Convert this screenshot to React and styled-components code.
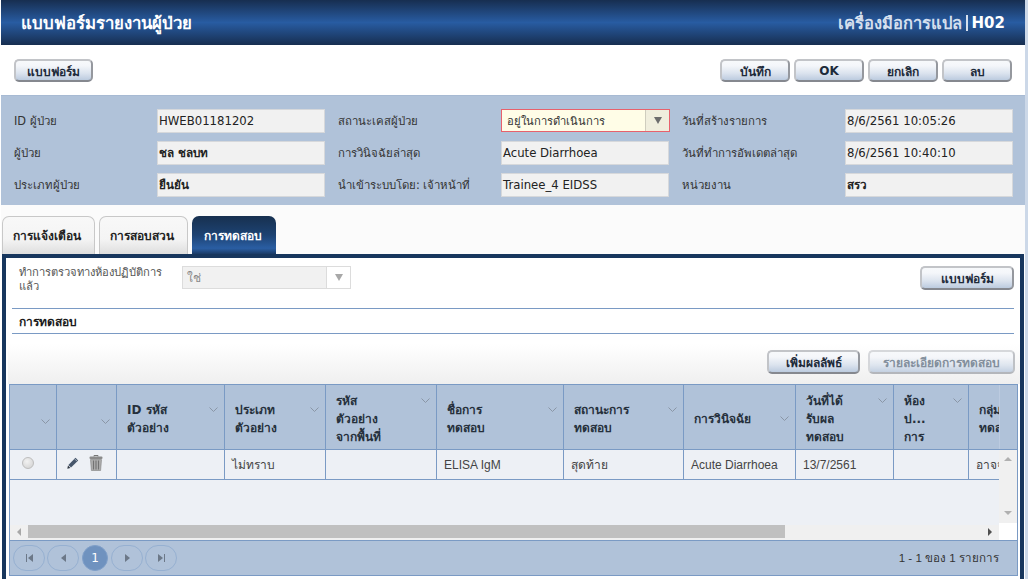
import React from 'react';
import styled, { createGlobalStyle } from 'styled-components';

const GlobalStyle = createGlobalStyle`
  html, body {
    margin: 0;
    padding: 0;
    background: #ffffff;
  }
  * {
    box-sizing: border-box;
  }
  body {
    font-family: "DejaVu Sans", "Noto Sans", sans-serif;
    font-size: 12px;
    color: #333333;
  }
`;

const Page = styled.div`
  width: 1028px;
  height: 579px;
  overflow: hidden;
  border-left: 1px solid #ffffff;
  border-right: 3px solid #ccd8e8;
`;

const Header = styled.header`
  height: 45px;
  padding: 0 20px;
  display: flex;
  align-items: center;
  justify-content: space-between;
  background: linear-gradient(180deg, #172e50 0%, #285ca2 50%, #172e50 100%);
  color: #ffffff;
  font-weight: bold;
`;

const Title = styled.div`
  font-size: 16.8px;
`;

const HeaderTools = styled.div`
  display: flex;
  align-items: center;
  font-size: 16.5px;
  color: #d5dfed;
`;

const HeaderDivider = styled.span`
  width: 2px;
  height: 16px;
  margin: 0 4px;
  background: #d5dfed;
`;

const HeaderCode = styled.span`
  font-size: 15px;
  color: #ffffff;
`;

const Toolbar = styled.div`
  height: 50px;
  padding: 14px 13px 0;
  display: flex;
  justify-content: space-between;
  align-items: flex-start;
`;

const ButtonGroup = styled.div`
  display: flex;
  gap: 4px;
`;

const Button = styled.button`
  width: ${p => p.$width}px;
  height: ${p => p.$height || 23}px;
  padding: 1px 0 0;
  font-family: inherit;
  font-size: 12px;
  font-weight: bold;
  color: ${p => (p.disabled ? '#6f7d8d' : '#1d2a3a')};
  border: 2px solid ${p => (p.disabled ? '#d0d2d6' : '#c2c4c8')};
  border-right-color: ${p => (p.disabled ? '#b5b8bd' : '#95989e')};
  border-bottom-color: ${p => (p.disabled ? '#a9acb2' : '#85888f')};
  border-radius: 5px;
  background: linear-gradient(180deg, #f7f9fb 0%, #f4f6fa 25%, #dbe3ee 65%, #bccbdf 100%);
  ${p => p.disabled && 'opacity: 0.85;'}
`;

const InfoBand = styled.section`
  height: 110px;
  padding: 13px 0 0 13px;
  display: grid;
  grid-template-columns: 143px 181px 163px 181px 163px 181px;
  grid-auto-rows: 24px;
  row-gap: 8px;
  align-items: center;
  background: #b0c2d9;
  border-top: 1px solid #a7bad3;
`;

const FieldLabel = styled.div`
  margin-top: -1px;
  font-size: 11.4px;
  color: #333333;
  white-space: nowrap;
`;

const FieldValue = styled.div`
  height: 24px;
  width: 168px;
  padding-left: 1px;
  display: flex;
  align-items: center;
  font-size: 11.7px;
  font-weight: ${p => (p.$strong ? 'bold' : 'normal')};
  background: #f1f1f1;
  border: 1px solid #d6d8db;
  color: #222222;
  white-space: nowrap;
`;

const StatusSelect = styled.div`
  height: 23px;
  width: 169px;
  display: flex;
  align-self: start;
  background: #fffde7;
  border: 1px solid #e8616c;
`;

const SelectText = styled.div`
  flex: 1;
  padding-left: 5px;
  display: flex;
  align-items: center;
  font-size: 11.2px;
  white-space: nowrap;
`;

const SelectArrow = styled.div`
  width: 24px;
  display: flex;
  align-items: center;
  justify-content: center;
  background: #f0eedd;
  border-left: 1px solid #cfcdbe;
`;

const Triangle = styled.span`
  width: 0;
  height: 0;
  border-left: 4px solid transparent;
  border-right: 4px solid transparent;
  border-top: 7px solid ${p => p.$color || '#6c6c6c'};
`;

const TabBar = styled.nav`
  height: 49px;
  padding: 11px 1px 0;
  display: flex;
  gap: 4px;
  background: #fbfbfb;
`;

const Tab = styled.div`
  width: ${p => p.$width}px;
  height: 38px;
  padding-right: 3px;
  display: flex;
  align-items: center;
  justify-content: center;
  font-weight: bold;
  border-radius: 7px 7px 0 0;
  border: ${p => (p.$active ? 'none' : '1px solid #c8c8c8')};
  border-bottom: none;
  color: ${p => (p.$active ? '#ffffff' : '#222222')};
  background: ${p =>
    p.$active
      ? 'linear-gradient(180deg, #17304f 0%, #1d4272 50%, #2a5ea3 85%, #1b3b66 100%)'
      : 'linear-gradient(180deg, #f8f8f8 0%, #f4f4f4 60%, #dedede 100%)'};
`;

const TabPanel = styled.div`
  height: 325px;
  margin: 0 0 0 1px;
  width: 1022px;
  border: 4px solid #17365d;
  border-bottom: none;
  background: #ffffff;
`;

const FilterRow = styled.div`
  height: 50px;
  padding: 8px 6px 0 13px;
  display: flex;
  align-items: flex-start;
`;

const FilterLabel = styled.div`
  width: 163px;
  font-size: 11.2px;
  line-height: 14px;
  color: #555555;
  white-space: pre-line;
`;

const FilterSelect = styled.div`
  width: 169px;
  height: 23px;
  display: flex;
  background: #f1f1f1;
  border: 1px solid #dcdcdc;
  color: #888888;
`;

const FilterArrow = styled.div`
  width: 24px;
  display: flex;
  align-items: center;
  justify-content: center;
  background: #ffffff;
  border-left: 1px solid #dcdcdc;
`;

const FilterValue = styled.div`
  flex: 1;
  padding-left: 4px;
  display: flex;
  align-items: center;
`;

const Spacer = styled.div`
  flex: 1;
`;

const SectionTitle = styled.div`
  height: 26px;
  margin: 0 6px;
  padding-left: 7px;
  display: flex;
  align-items: center;
  font-weight: bold;
  color: #1a1a1a;
  border-top: 1px solid #7a9ac4;
  border-bottom: 1px solid #7a9ac4;
`;

const GridTools = styled.div`
  height: 40px;
  margin: 10px 0 0 2px;
  padding: 6px 5px 0 0;
  display: flex;
  justify-content: flex-end;
  gap: 8px;
  background: linear-gradient(180deg, #ffffff 0%, #efefef 100%);
`;

const Grid = styled.div`
  width: 1009px;
  margin-left: 3px;
  border: 1px solid #7a9ac4;
  background: #edf0f5;
  font-family: "Liberation Sans", "Noto Sans", sans-serif;
`;

const columns = '47px 60px 108px 101px 111px 127px 120px 112px 98px 75px 31px 18px';

const HeadRow = styled.div`
  height: 65px;
  display: grid;
  grid-template-columns: ${columns};
  background: #b0c2d9;
  border-bottom: 1px solid #7a9ac4;
  font-family: "DejaVu Sans", "Noto Sans", sans-serif;
`;

const HeadCell = styled.div`
  padding: 3px 6px 0 10px;
  display: flex;
  align-items: center;
  border-right: 1px solid ${p => (p.$faded ? '#bccbe0' : p.$last ? 'transparent' : '#7a9ac4')};
  overflow: hidden;
`;

const HeadInner = styled.div`
  width: 100%;
  display: flex;
  justify-content: space-between;
  align-items: flex-start;
`;

const HeadText = styled.div`
  font-weight: bold;
  line-height: 18px;
  color: #26303c;
  white-space: pre-line;
`;

const SortIcon = styled.svg`
  flex: none;
  width: 9px;
  height: 5px;
  margin-top: 6px;
  margin-left: auto;
`;

const BodyArea = styled.div`
  height: 75px;
  display: flex;
`;

const BodyScroll = styled.div`
  width: 989px;
  overflow: hidden;
`;

const BodyRow = styled.div`
  height: 30px;
  width: 1007px;
  display: grid;
  grid-template-columns: ${columns};
  border-bottom: 1px solid #7a9ac4;
`;

const BodyCell = styled.div`
  padding: 0 0 0 ${p => p.$inset || 7}px;
  display: flex;
  align-items: center;
  gap: 10px;
  color: #444444;
  border-right: 1px solid #7a9ac4;
  white-space: nowrap;
  overflow: hidden;
`;

const Radio = styled.span`
  width: 12px;
  height: 12px;
  margin: -3px 0 0 5px;
  border-radius: 50%;
  border: 1px solid #bdbdbd;
  background: radial-gradient(circle at 40% 35%, #f2f2f2 0%, #cfcfcf 100%);
`;

const RowIcons = styled.span`
  display: flex;
  align-items: center;
  gap: 10px;
  margin-top: -3px;
`;

const VerticalColumn = styled.div`
  width: 18px;
  background: #ffffff;
`;

const VerticalBar = styled.div`
  height: 73px;
  padding: 7px 0 8px;
  display: flex;
  flex-direction: column;
  justify-content: space-between;
  align-items: center;
  background: #f0f0f0;
`;

const ArrowUp = styled.span`
  width: 0;
  height: 0;
  border-left: 4px solid transparent;
  border-right: 4px solid transparent;
  border-bottom: 4px solid #b0b0b0;
`;

const ArrowDown = styled.span`
  width: 0;
  height: 0;
  border-left: 4px solid transparent;
  border-right: 4px solid transparent;
  border-top: 4px solid #b0b0b0;
`;

const HorizontalBar = styled.div`
  height: 15px;
  display: flex;
  background: #ffffff;
`;

const HorizontalTrack = styled.div`
  width: 989px;
  height: 15px;
  padding-bottom: 2px;
  display: flex;
  align-items: center;
  background: #f0f0f0;
`;

const ArrowSide = styled.span`
  width: 18px;
  display: flex;
  justify-content: center;
`;

const ArrowGlyph = styled.span`
  width: 0;
  height: 0;
  border-top: 4px solid transparent;
  border-bottom: 4px solid transparent;
  ${p =>
    p.$left
      ? 'border-right: 4px solid #a8a8a8;'
      : 'border-left: 4px solid #505050;'}
`;

const Thumb = styled.div`
  height: 13px;
  width: 757px;
  background: #c0c0c0;
`;

const Pager = styled.div`
  height: 35px;
  padding: 0 18px 0 3px;
  display: flex;
  align-items: center;
  justify-content: space-between;
  background: #b0c2d9;
  border-top: 1px solid #7a9ac4;
`;

const PagerButtons = styled.div`
  display: flex;
  align-items: center;
  gap: 2px;
`;

const PagerButton = styled.span`
  width: ${p => (p.$active ? 26 : 32)}px;
  height: 26px;
  margin: 0 ${p => (p.$active ? 1 : 0)}px;
  display: flex;
  align-items: center;
  justify-content: center;
  gap: 1px;
  font-family: "DejaVu Sans", sans-serif;
  color: #ffffff;
  border-radius: 13px;
  border: 1px solid ${p => (p.$active ? '#7f9fc9' : '#96b0d1')};
  background: ${p => (p.$active ? '#6f92bf' : 'transparent')};
`;

const PagerBar = styled.span`
  width: 1px;
  height: 8px;
  background: #6c7888;
`;

const PagerTriangle = styled.span`
  width: 0;
  height: 0;
  border-top: 4px solid transparent;
  border-bottom: 4px solid transparent;
  ${p =>
    p.$left
      ? 'border-right: 5px solid #6c7888;'
      : 'border-left: 5px solid #6c7888;'}
`;

const PagerInfo = styled.div`
  font-size: 11.6px;
  color: #333333;
`;

const fields = [
  { label: 'ID ผู้ป่วย', value: 'HWEB01181202' },
  { label: 'สถานะเคสผู้ป่วย', value: null },
  { label: 'วันที่สร้างรายการ', value: '8/6/2561 10:05:26' },
  { label: 'ผู้ป่วย', value: 'ชล ชลบท', strong: true },
  { label: 'การวินิจฉัยล่าสุด', value: 'Acute Diarrhoea' },
  { label: 'วันที่ทำการอัพเดตล่าสุด', value: '8/6/2561 10:40:10' },
  { label: 'ประเภทผู้ป่วย', value: 'ยืนยัน', strong: true },
  { label: 'นำเข้าระบบโดย: เจ้าหน้าที่', value: 'Trainee_4 EIDSS' },
  { label: 'หน่วยงาน', value: 'สรว', strong: true },
];

const headers = [
  '',
  '',
  'ID รหัส\nตัวอย่าง',
  'ประเภท\nตัวอย่าง',
  'รหัส\nตัวอย่าง\nจากพื้นที่',
  'ชื่อการ\nทดสอบ',
  'สถานะการ\nทดสอบ',
  'การวินิจฉัย',
  'วันที่ได้\nรับผล\nทดสอบ',
  'ห้อง\nป...\nการ',
  'กลุ่ม\nทดสอบ',
];

const cells = ['', 'ไม่ทราบ', '', 'ELISA IgM', 'สุดท้าย', 'Acute Diarrhoea', '13/7/2561', '', 'อาจจะ'];

const Chevron = () => (
  <SortIcon viewBox="0 0 9 5">
    <path d="M0.5 0.5L4.5 4.5L8.5 0.5" fill="none" stroke="#8a96a6" strokeWidth="1" />
  </SortIcon>
);

const PencilIcon = () => (
  <svg width="12" height="12" viewBox="0 0 12 12">
    <path d="M8.5 0.8L11.2 3.4L4 10.4L1.4 7.9Z" fill="#46566b" />
    <path d="M1 8.6L3.4 11L0.3 11.7Z" fill="#2d3641" />
    <path d="M8 2.2L9.8 4" stroke="#dfe6ee" strokeWidth="0.7" />
  </svg>
);

const TrashIcon = () => (
  <svg width="14" height="16" viewBox="0 0 14 16">
    <path d="M5 1.5V0.5H9V1.5" fill="none" stroke="#777777" />
    <rect x="0.5" y="1.5" width="13" height="2.5" rx="1" fill="#8a8a8a" />
    <path d="M1.5 4.5H12.5L11.6 15.5H2.4Z" fill="#adadad" stroke="#808080" strokeWidth="0.6" />
    <path d="M4.5 5.5V14.5M7 5.5V14.5M9.5 5.5V14.5" stroke="#727272" strokeWidth="1.1" />
  </svg>
);

const App = () => (
  <Page>
    <GlobalStyle />
    <Header>
      <Title>แบบฟอร์มรายงานผู้ป่วย</Title>
      <HeaderTools>
        เครื่องมือการแปล
        <HeaderDivider />
        <HeaderCode>H02</HeaderCode>
      </HeaderTools>
    </Header>

    <Toolbar>
      <Button $width={79}>แบบฟอร์ม</Button>
      <ButtonGroup>
        <Button $width={70}>บันทึก</Button>
        <Button $width={70}>OK</Button>
        <Button $width={70}>ยกเลิก</Button>
        <Button $width={70}>ลบ</Button>
      </ButtonGroup>
    </Toolbar>

    <InfoBand>
      {fields.map(({ label, value, strong }) => (
        <React.Fragment key={label}>
          <FieldLabel>{label}</FieldLabel>
          {value === null ? (
            <StatusSelect>
              <SelectText>อยู่ในการดำเนินการ</SelectText>
              <SelectArrow>
                <Triangle />
              </SelectArrow>
            </StatusSelect>
          ) : (
            <FieldValue $strong={strong}>{value}</FieldValue>
          )}
        </React.Fragment>
      ))}
    </InfoBand>

    <TabBar>
      <Tab $width={93}>การแจ้งเตือน</Tab>
      <Tab $width={89}>การสอบสวน</Tab>
      <Tab $width={84} $active>การทดสอบ</Tab>
    </TabBar>

    <TabPanel>
      <FilterRow>
        <FilterLabel>{'ทำการตรวจทางห้องปฏิบัติการ\nแล้ว'}</FilterLabel>
        <FilterSelect>
          <FilterValue>ใช่</FilterValue>
          <FilterArrow>
            <Triangle $color="#a8a8a8" />
          </FilterArrow>
        </FilterSelect>
        <Spacer />
        <Button $width={94} $height={24}>แบบฟอร์ม</Button>
      </FilterRow>

      <SectionTitle>การทดสอบ</SectionTitle>

      <GridTools>
        <Button $width={93} $height={24}>เพิ่มผลลัพธ์</Button>
        <Button $width={147} $height={24} disabled>รายละเอียดการทดสอบ</Button>
      </GridTools>

      <Grid>
        <HeadRow>
          {headers.map((text, i) => (
            <HeadCell key={i} $faded={i === 10}>
              <HeadInner>
                <HeadText>{text}</HeadText>
                {i < 10 && <Chevron />}
              </HeadInner>
            </HeadCell>
          ))}
          <HeadCell $last />
        </HeadRow>

        <BodyArea>
          <BodyScroll>
            <BodyRow>
              <BodyCell>
                <Radio />
              </BodyCell>
              <BodyCell $inset={10}>
                <RowIcons>
                  <PencilIcon />
                  <TrashIcon />
                </RowIcons>
              </BodyCell>
              {cells.map((text, i) => (
                <BodyCell key={i}>{text}</BodyCell>
              ))}
            </BodyRow>
          </BodyScroll>
          <VerticalColumn>
            <VerticalBar>
              <ArrowUp />
              <ArrowDown />
            </VerticalBar>
          </VerticalColumn>
        </BodyArea>

        <HorizontalBar>
          <HorizontalTrack>
            <ArrowSide>
              <ArrowGlyph $left />
            </ArrowSide>
            <Thumb />
            <Spacer />
            <ArrowSide>
              <ArrowGlyph />
            </ArrowSide>
          </HorizontalTrack>
        </HorizontalBar>

        <Pager>
          <PagerButtons>
            <PagerButton>
              <PagerBar />
              <PagerTriangle $left />
            </PagerButton>
            <PagerButton>
              <PagerTriangle $left />
            </PagerButton>
            <PagerButton $active>1</PagerButton>
            <PagerButton>
              <PagerTriangle />
            </PagerButton>
            <PagerButton>
              <PagerTriangle />
              <PagerBar />
            </PagerButton>
          </PagerButtons>
          <PagerInfo>1 - 1 ของ 1 รายการ</PagerInfo>
        </Pager>
      </Grid>
    </TabPanel>
  </Page>
);

export default App;
